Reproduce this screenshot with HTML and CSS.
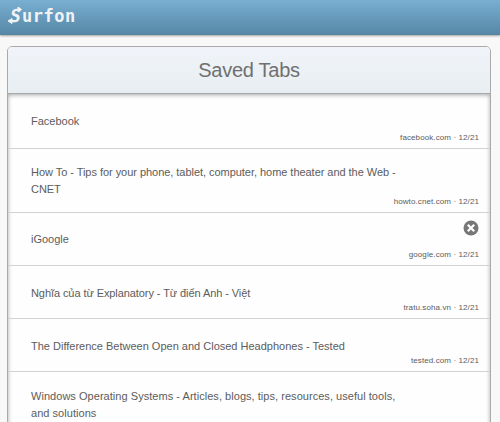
FILE: index.html
```
<!DOCTYPE html>
<html lang="en">
<head>
  <meta charset="UTF-8" />
  <title>Surfon - Saved Tabs</title>
  <link rel="stylesheet" href="styles.css">
</head>
<body>

<!-- Top bar -->
<div class="topbar">
  <div class="logo">
    <span class="logo-s">S</span><span>urfon</span>
    <svg class="logo-arrows" width="16" height="20" viewBox="0 0 16 20">
      <path d="M11 2l3.500 2.500-3.500 2.500zM5 13.500v5l-4-2.500z" />
      <path d="M9 4.500h3M4 16h3" />
    </svg>
  </div>
</div>

<!-- Saved tabs -->
<div class="panel">
  <h1>Saved Tabs</h1>
  <div class="tabs">
    <div class="tab first">
      <a class="title">Facebook</a>
      <span class="meta">facebook.com · 12/21</span>
    </div>
    <div class="tab tall">
      <a class="title snug">How To - Tips for your phone, tablet, computer, home theater and the Web - CNET</a>
      <span class="meta">howto.cnet.com · 12/21</span>
    </div>
    <div class="tab hover">
      <a class="title">iGoogle</a>
      <svg class="close" width="16" height="16" viewBox="0 0 16 16">
        <circle cx="8" cy="8" r="7.500" />
        <path d="M4.800 4.800l6.400 6.400M11.200 4.800l-6.400 6.400" />
      </svg>
      <span class="meta">google.com · 12/21</span>
    </div>
    <div class="tab">
      <a class="title tight">Nghĩa của từ Explanatory - Từ điển Anh - Việt</a>
      <span class="meta">tratu.soha.vn · 12/21</span>
    </div>
    <div class="tab">
      <a class="title">The Difference Between Open and Closed Headphones - Tested</a>
      <span class="meta">tested.com · 12/21</span>
    </div>
    <div class="tab tall last">
      <a class="title wide">Windows Operating Systems - Articles, blogs, tips, resources, useful tools, and solutions</a>
    </div>
  </div>
</div>

</body>
</html>
```
FILE: styles.css
```
* { box-sizing:border-box; }
body { background:#f8f8f8; color:#5c5c5c; font-family:"Liberation Sans", Arial, sans-serif; margin:0; height:422px; overflow:hidden; }

.topbar { height:35px; background:linear-gradient(#79afd2, #5788a6); border-bottom:1px solid #5884a0; box-shadow:0 1px 2px rgba(0,0,0,.35); padding:4px 7px; }
.logo { position:relative; color:#f0f3f5; font:bold 17px/24px "DejaVu Sans Mono", monospace; letter-spacing:.5px; padding-left:3px; }
.logo-s { display:inline-block; width:12px; font-size:18px; transform:skewX(-10deg); }
.logo-arrows { position:absolute; left:0; top:1px; fill:#f0f3f5; stroke:#f0f3f5; stroke-width:1; }

.panel { margin:11px 9px 0 7px; height:390px; background:#fefefe; border:1px solid #aaa; border-radius:5px 5px 0 0; }
h1 { margin:0; height:47px; border-bottom:1px solid #a4a9ab; border-radius:4px 4px 0 0; background:linear-gradient(#f0f4fa, #e8eef1); color:#707070; font-size:20px; font-weight:normal; letter-spacing:-.25px; line-height:46px; text-align:center; }
.tabs { height:342px; box-shadow:inset 0 1px 4px rgba(0,0,0,.35); }

.tab { position:relative; height:53px; padding:19px 86px 0 23px; border-bottom:1px solid #d2d2d2; }
.tab.first { height:55px; }
.tab.hover { padding-top:18px; }
.tab.tall { height:64px; padding-top:15px; }
.tab.last { padding-top:16px; }
.title { display:block; font-size:11px; line-height:16px; }
.tall .title { line-height:17px; }
.title.snug { letter-spacing:-.04px; }
.title.tight { letter-spacing:-.08px; }
.title.wide { letter-spacing:.04px; }
.meta { position:absolute; right:11px; bottom:5px; font-size:8px; letter-spacing:.1px; line-height:10px; }
.close { position:absolute; right:11px; top:7px; }
.close circle { fill:#777; }
.close path { stroke:#fff; stroke-width:2.2; }
```
